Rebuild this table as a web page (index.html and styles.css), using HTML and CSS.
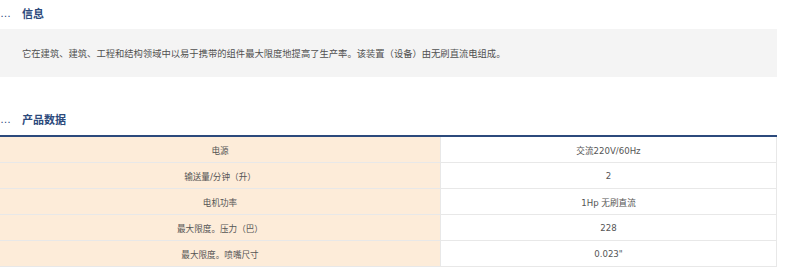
FILE: index.html
```html
<!DOCTYPE html>
<html lang="zh">
<head>
<meta charset="utf-8">
<link rel="stylesheet" href="styles.css">
</head>
<body>
<div class="page">
  <section class="info">
    <h2 class="heading"><span class="dots">…</span><span class="title">信息</span></h2>
    <div class="desc">它在建筑、建筑、工程和结构领域中以易于携带的组件最大限度地提高了生产率。该装置（设备）由无刷直流电组成。</div>
  </section>
  <section class="data">
    <h2 class="heading"><span class="dots">…</span><span class="title">产品数据</span></h2>
    <table class="specs">
      <tr><td class="k">电源</td><td class="v">交流220V/60Hz</td></tr>
      <tr><td class="k">输送量/分钟（升）</td><td class="v">2</td></tr>
      <tr><td class="k">电机功率</td><td class="v">1Hp 无刷直流</td></tr>
      <tr><td class="k">最大限度。压力（巴）</td><td class="v">228</td></tr>
      <tr><td class="k">最大限度。喷嘴尺寸</td><td class="v">0.023"</td></tr>
    </table>
  </section>
</div>
</body>
</html>
```
FILE: styles.css
```css
html, body {
  margin: 0;
  padding: 0;
  background: #ffffff;
}
body {
  font-family: "DejaVu Sans", "Noto Sans CJK SC", sans-serif;
  color: #555555;
}
.page {
  width: 777px;
}
.heading {
  display: flex;
  align-items: center;
  height: 26px;
  margin: 0;
  color: #2c4a7c;
  font-size: 11px;
  font-weight: 700;
  font-family: "Noto Sans CJK SC", sans-serif;
}
.dots {
  flex: 0 0 22px;
  font-family: "Liberation Sans", sans-serif;
  font-size: 11px;
  font-weight: 400;
  line-height: 1;
}
.info .heading {
  margin-bottom: 3px;
}
.desc {
  background: #f4f4f4;
  height: 48px;
  display: flex;
  align-items: center;
  padding-left: 22px;
  font-size: 9.3px;
  color: #505050;
  font-family: "Noto Sans CJK SC", sans-serif;
}
.data {
  margin-top: 29px;
}
.data .heading {
  margin-bottom: 3px;
}
.specs {
  width: 777px;
  border-collapse: collapse;
  border-top: 2px solid #2c4a7c;
  font-size: 8.6px;
  color: #555555;
}
.specs td {
  height: 25px;
  padding: 0;
  text-align: center;
  border: 1px solid #e8e8e8;
}
.specs tr:first-child td {
  border-top: 0;
}
.specs td.k {
  width: 440px;
  background: #fdecd9;
  border-left: 0;
}
.specs td.v {
  background: #ffffff;
}
```
